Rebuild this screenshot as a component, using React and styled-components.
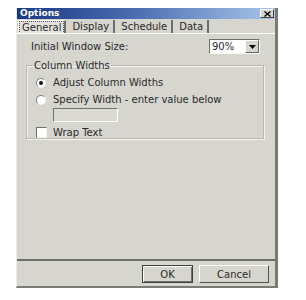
import React from "react";
import styled, { createGlobalStyle } from "styled-components";

const Global = createGlobalStyle`
  html, body { margin: 0; padding: 0; background: #ffffff; }
  body { font-family: "DejaVu Sans", Tahoma, sans-serif; }
`;

const Page = styled.div`
  padding: 8px 0 0 16px;
`;

const Dialog = styled.div`
  width: 262px;
  height: 280px;
  box-sizing: border-box;
  background: #d6d5ce;
  border-left: 1px solid #ecebe6;
  border-right: 3px solid #7a7a76;
  border-bottom: 2px solid #7a7a76;
  display: flex;
  flex-direction: column;
`;

const TitleBar = styled.div`
  height: 11px;
  background: linear-gradient(to right, #1a3a86 0%, #4a6cb0 45%, #a9c5ea 100%);
  display: flex;
  align-items: center;
  justify-content: space-between;
  padding: 0 1px 0 3px;
`;

const Title = styled.span`
  color: #ffffff;
  font-weight: bold;
  font-size: 9px;
  line-height: 11px;
`;

const CloseBtn = styled.div`
  width: 14px;
  height: 9px;
  box-sizing: border-box;
  background: #d6d5ce;
  border: 1px solid;
  border-color: #ffffff #404040 #404040 #ffffff;
  display: flex;
  align-items: center;
  justify-content: center;
`;

const Tabs = styled.div`
  height: 14px;
  display: flex;
  align-items: flex-end;
  padding-left: 1px;
`;

const Tab = styled.div`
  height: 13px;
  box-sizing: border-box;
  padding: ${(p) => (p.$active ? "0 1px" : "0 4px 0 6px")};
  font-size: 10px;
  line-height: 11px;
  color: #2a2a2a;
  border-right: 2px solid #6c6c68;
  border-left: ${(p) => (p.$active ? "1px solid #ffffff" : "none")};
  border-top: ${(p) => (p.$active ? "1px solid #ffffff" : "none")};
  display: flex;
  align-items: center;
  background: ${(p) => (p.$active ? "#e2e1db" : "transparent")};
`;

const Focus = styled.span`
  outline: 1px dotted #555;
  outline-offset: 0;
  padding: 0 2px;
`;

const Panel = styled.div`
  flex: 1;
  border-top: 1px solid #ffffff;
  border-bottom: 2px solid #6c6c68;
  padding: 5px 9px 0 9px;
`;

const Row = styled.div`
  display: flex;
  align-items: center;
  justify-content: space-between;
  padding-left: 5px;
  font-size: 10px;
  color: #2a2a2a;
  height: 15px;
`;

const Select = styled.div`
  width: 51px;
  height: 15px;
  box-sizing: border-box;
  background: #fff;
  border: 1px solid;
  border-color: #707070 #ffffff #ffffff #707070;
  display: flex;
  align-items: stretch;
  margin-right: 6px;
`;

const SelectValue = styled.span`
  flex: 1;
  font-size: 10px;
  line-height: 13px;
  padding-left: 2px;
  color: #2a2a2a;
`;

const SelectArrow = styled.span`
  width: 14px;
  background: #d6d5ce;
  border: 1px solid;
  border-color: #ffffff #606060 #606060 #ffffff;
  display: flex;
  align-items: center;
  justify-content: center;
  box-sizing: border-box;
`;

const Group = styled.fieldset`
  margin: 6px 0 0 0;
  width: 238px;
  height: 79px;
  box-sizing: border-box;
  border: 1px solid #b8b7b0;
  box-shadow: 1px 1px 0 #f2f1ec, inset 1px 1px 0 #f2f1ec;
  padding: 3px 0 0 4px;
`;

const Legend = styled.legend`
  font-size: 10px;
  color: #2a2a2a;
  padding: 0 1px;
  margin-left: 2px;
`;

const Option = styled.label`
  display: flex;
  align-items: center;
  gap: 7px;
  font-size: 10px;
  color: #2a2a2a;
  height: 17px;
  padding-left: 5px;
`;

const Radio = styled.span`
  width: 10px;
  height: 10px;
  box-sizing: border-box;
  border-radius: 50%;
  background: #fff;
  border: 1px solid;
  border-color: #808080 #f4f4f4 #f4f4f4 #808080;
  display: flex;
  align-items: center;
  justify-content: center;
  &::after {
    content: "";
    width: 4px;
    height: 4px;
    border-radius: 50%;
    background: ${(p) => (p.$checked ? "#111" : "transparent")};
  }
`;

const TextBox = styled.div`
  width: 65px;
  height: 14px;
  box-sizing: border-box;
  margin: 0 0 5px 22px;
  background: #dad9d3;
  border: 1px solid;
  border-color: #707070 #ffffff #ffffff #707070;
`;

const Check = styled.span`
  width: 11px;
  height: 11px;
  box-sizing: border-box;
  background: #fff;
  border: 1px solid;
  border-color: #707070 #f4f4f4 #f4f4f4 #707070;
`;

const CheckRow = styled(Option)`
  padding-left: 5px;
  gap: 6px;
  height: 11px;
`;

const Footer = styled.div`
  height: 25px;
  display: flex;
  align-items: flex-start;
  justify-content: flex-end;
  gap: 6px;
  padding: 4px 6px 0 0;
  box-sizing: border-box;
`;

const Button = styled.div`
  width: ${(p) => p.$w}px;
  height: 18px;
  box-sizing: border-box;
  border: 1px solid;
  border-color: ${(p) => (p.$default ? "#404040" : "#ffffff #505050 #505050 #ffffff")};
  box-shadow: ${(p) => (p.$default ? "inset 1px 1px 0 #fff, inset -1px -1px 0 #707070" : "none")};
  display: flex;
  align-items: center;
  justify-content: center;
  font-size: 10px;
  color: #2a2a2a;
`;

export default function App() {
  return (
    <>
      <Global />
      <Page>
        <Dialog>
          <TitleBar>
            <Title>Options</Title>
            <CloseBtn>
              <svg width="7" height="6" viewBox="0 0 7 6">
                <path d="M0.5 0.5L6.5 5.5M6.5 0.5L0.5 5.5" stroke="#000" strokeWidth="1.4" />
              </svg>
            </CloseBtn>
          </TitleBar>
          <Tabs>
            <Tab $active>
              <Focus>General</Focus>
            </Tab>
            <Tab>Display</Tab>
            <Tab>Schedule</Tab>
            <Tab>Data</Tab>
          </Tabs>
          <Panel>
            <Row>
              <span>Initial Window Size:</span>
              <Select>
                <SelectValue>90%</SelectValue>
                <SelectArrow>
                  <svg width="7" height="4" viewBox="0 0 7 4">
                    <path d="M0 0h7L3.5 4z" fill="#000" />
                  </svg>
                </SelectArrow>
              </Select>
            </Row>
            <Group>
              <Legend>Column Widths</Legend>
              <Option>
                <Radio $checked />
                Adjust Column Widths
              </Option>
              <Option>
                <Radio />
                Specify Width - enter value below
              </Option>
              <TextBox />
              <CheckRow>
                <Check />
                Wrap Text
              </CheckRow>
            </Group>
          </Panel>
          <Footer>
            <Button $w={51} $default>OK</Button>
            <Button $w={70}>Cancel</Button>
          </Footer>
        </Dialog>
      </Page>
    </>
  );
}
